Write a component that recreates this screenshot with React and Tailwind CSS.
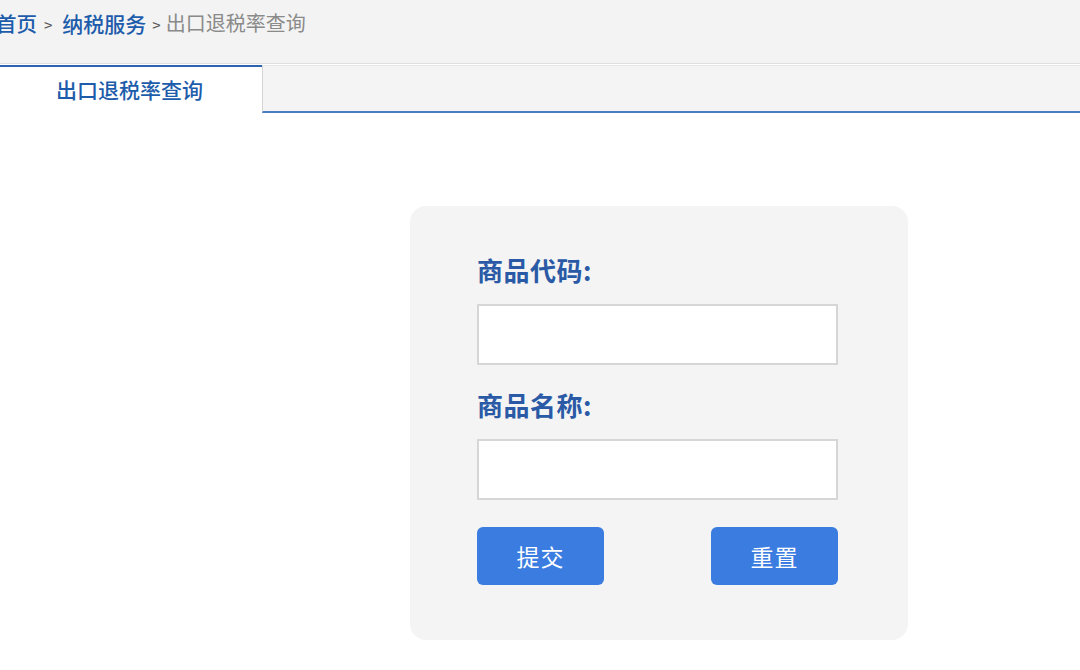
const cjk = { fontFamily: '"Noto Sans CJK SC", "Noto Sans", sans-serif' }

function Field({ label }) {
  return (
    <div className="flex flex-col">
      <label className="text-[26px] font-bold text-[#2a5aa6] leading-[36px] tracking-[0.5px]">
        {label}:
      </label>
      <input type="text" className="mt-[16px] h-[61px] w-[361px] bg-white border-2 border-[#d6d6d6] outline-none" />
    </div>
  )
}

export default function App() {
  return (
    <div className="w-[1080px] h-[670px] bg-white overflow-hidden" style={cjk}>
      {/* breadcrumb */}
      <div className="h-[64px] bg-[#f3f3f3] border-b border-[#dedede] flex items-start pt-[8px] ml-[-4px]">
        <a className="text-[20.5px] leading-[30px] text-[#1d5cab] font-medium">首页</a>
        <span className="text-[15px] leading-[30px] text-[#555] ml-[7px] mr-[10px] pt-[2px]">&gt;</span>
        <a className="text-[21px] leading-[30px] text-[#1d5cab] font-medium">纳税服务</a>
        <span className="text-[15px] leading-[30px] text-[#555] ml-[6px] mr-[5px] pt-[2px]">&gt;</span>
        <span className="text-[20px] leading-[30px] text-[#8a8a8a]">出口退税率查询</span>
      </div>

      {/* tabs */}
      <div className="flex mt-[1px] h-[48px]">
        <div className="w-[262px] border-t-2 border-[#2d63b0] bg-white flex items-center justify-center pb-[2px] pr-[3px]">
          <span className="text-[21px] font-medium text-[#1d5cab] leading-[30px]">出口退税率查询</span>
        </div>
        <div className="flex-1 bg-[#f4f4f4] border-l border-[#d4d4d4] border-t border-t-[#e6e6e6] border-b-2 border-b-[#4a7cc4]" />
      </div>

      {/* form card */}
      <div className="flex justify-center pt-[93px] pl-[238px]">
        <div className="w-[498px] h-[434px] bg-[#f4f4f4] rounded-[16px] pl-[67px] pt-[46px]">
          <div className="flex flex-col gap-[22px]">
            <Field label="商品代码" />
            <Field label="商品名称" />
          </div>
          <div className="flex justify-between w-[361px] mt-[27px]">
            <button className="w-[127px] h-[58px] rounded-[6px] bg-[#3a7cdf] text-white text-[23px] tracking-[1px]">提交</button>
            <button className="w-[127px] h-[58px] rounded-[6px] bg-[#3a7cdf] text-white text-[23px] tracking-[1px]">重置</button>
          </div>
        </div>
      </div>
    </div>
  )
}
